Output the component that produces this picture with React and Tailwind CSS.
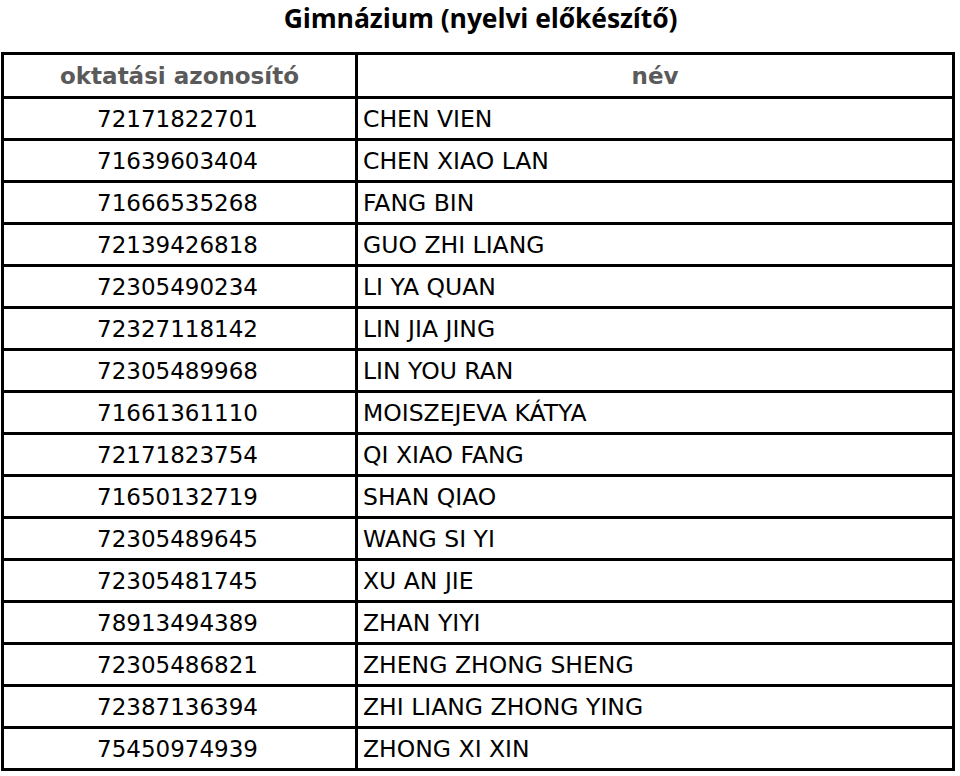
import React from "react";

const rows = [
  ["72171822701", "CHEN VIEN"],
  ["71639603404", "CHEN XIAO LAN"],
  ["71666535268", "FANG BIN"],
  ["72139426818", "GUO ZHI LIANG"],
  ["72305490234", "LI YA QUAN"],
  ["72327118142", "LIN JIA JING"],
  ["72305489968", "LIN YOU RAN"],
  ["71661361110", "MOISZEJEVA KÁTYA"],
  ["72171823754", "QI XIAO FANG"],
  ["71650132719", "SHAN QIAO"],
  ["72305489645", "WANG SI YI"],
  ["72305481745", "XU AN JIE"],
  ["78913494389", "ZHAN YIYI"],
  ["72305486821", "ZHENG ZHONG SHENG"],
  ["72387136394", "ZHI LIANG ZHONG YING"],
  ["75450974939", "ZHONG XI XIN"],
];

export default function App() {
  return (
    <div className="w-[960px] h-[776px] bg-white overflow-hidden" style={{ fontFamily: '"DejaVu Sans", Verdana, sans-serif' }}>
      <div className="h-[52px] flex justify-center">
        <h1
          className="text-[26.5px] font-bold text-black leading-[36px] pl-[1px] tracking-[-0.1px]"
          style={{ fontFamily: '"Open Sans", "Noto Sans", sans-serif' }}
        >
          Gimnázium (nyelvi előkészítő)
        </h1>
      </div>
      <div className="ml-[1px] w-[954px] border-[3px] border-black">
        <div className="flex h-[41px]">
          <div className="w-[351px] flex items-center justify-center text-[23px] font-bold text-[#5a5a5a] pt-[1px]">
            oktatási azonosító
          </div>
          <div className="w-[3px] bg-black" />
          <div className="flex-1 flex items-center justify-center text-[23px] font-bold text-[#5a5a5a] pt-[1px]">
            név
          </div>
        </div>
        {rows.map(([id, name]) => (
          <div key={id} className="flex h-[42px] border-t-[3px] border-black">
            <div className="w-[351px] flex items-center justify-center text-[23px] text-black pt-[2px] pr-[4px]">
              {id}
            </div>
            <div className="w-[3px] bg-black" />
            <div className="flex-1 flex items-center pl-[5px] text-[23.5px] text-black pt-[2px]">
              {name}
            </div>
          </div>
        ))}
      </div>
    </div>
  );
}
